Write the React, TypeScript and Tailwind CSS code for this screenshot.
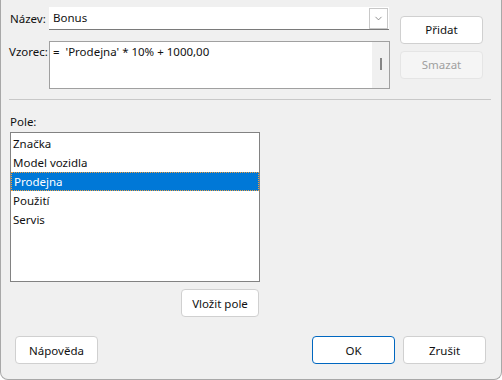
import { ChevronDown } from "lucide-react";

const font = { fontFamily: '"Segoe UI", "Noto Sans", "Open Sans", sans-serif' };

function Button({ label, className = "", disabled = false, primary = false }: { label: string; className?: string; disabled?: boolean; primary?: boolean }) {
  return (
    <button
      className={
        "h-[28px] rounded-[4px] border text-[11.5px] flex items-center justify-center " +
        (disabled
          ? "bg-[#f5f5f5] border-[#e5e5e5] text-[#a0a0a0] "
          : primary
            ? "bg-white border-[#0067c0] text-[#111111] "
            : "bg-white border-[#d0d0d0] text-[#111111] ") +
        className
      }
    >
      {label}
    </button>
  );
}

export default function App() {
  const fields = ["Značka", "Model vozidla", "Prodejna", "Použití", "Servis"];

  return (
    <div
      style={font}
      className="w-[502px] h-[380px] bg-[#f0f0f0] border-x border-b border-[#a8a8a8] rounded-b-[8px] text-[11.5px] text-[#111111] flex flex-col"
    >
      <div className="flex pl-[8px] pt-[7px]">
        <div className="flex flex-col">
          <div className="flex items-center h-[23px]">
            <span className="w-[40px] pl-[1px]">Název:</span>
            <div className="w-[340px] h-[23px] bg-white border-b border-[#7a7a7a] flex items-center">
              <span className="flex-1 pl-[4px]">Bonus</span>
              <div className="w-[19px] h-[21px] mr-[1px] border border-[#c8c8c8] flex items-center justify-center bg-white">
                <ChevronDown className="w-[11px] h-[11px] text-[#606060]" strokeWidth={1.5} />
              </div>
            </div>
          </div>
          <div className="flex mt-[11px]">
            <span className="w-[40px] pt-[2px]">Vzorec:</span>
            <div className="w-[341px] h-[48px] bg-white border border-[#a0a0a0] flex">
              <span className="flex-1 pl-[3px] pt-[1px] whitespace-pre">=  'Prodejna' * 10% + 1000,00</span>
              <div className="w-[17px] h-full bg-[#f0f0f0] flex justify-center pt-[16px]">
                <div className="w-[2px] h-[12px] bg-[#858585]" />
              </div>
            </div>
          </div>
        </div>
        <div className="flex flex-col gap-[7px] ml-[10px] pt-[9px]">
          <Button label="Přidat" className="w-[83px]" />
          <Button label="Smazat" className="w-[83px]" disabled />
        </div>
      </div>

      <div className="mx-[8px] mt-[10px] h-[1px] bg-[#c8c8c8] w-[482px]" />

      <div className="pl-[9px] mt-[13px]">Pole:</div>

      <div className="ml-[9px] mt-[2px] w-[250px] h-[150px] bg-white border border-[#828282] py-[1px]">
        {fields.map((f) => (
          <div
            key={f}
            className={
              "h-[19px] pl-[2px] flex items-center " +
              (f === "Prodejna" ? "bg-[#0078d7] text-white border border-dotted border-[#f0a040] pl-[1px]" : "")
            }
          >
            {f}
          </div>
        ))}
      </div>

      <div className="flex w-[258px] justify-end mt-[7px]">
        <Button label="Vložit pole" className="w-[78px]" />
      </div>

      <div className="flex mt-[19px] pl-[14px] pr-[15px]">
        <Button label="Nápověda" className="w-[83px]" />
        <div className="flex-1" />
        <Button label="OK" className="w-[83px]" primary />
        <Button label="Zrušit" className="w-[83px] ml-[8px]" />
      </div>
    </div>
  );
}
